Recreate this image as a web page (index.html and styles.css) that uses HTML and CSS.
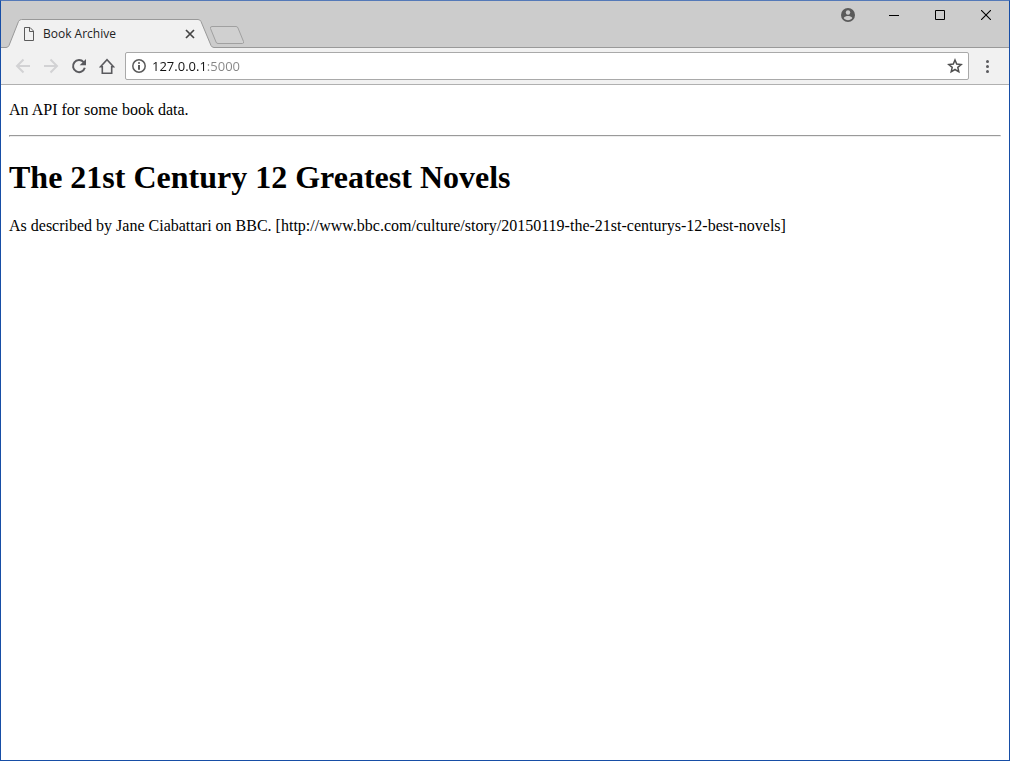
FILE: index.html
```html
<!DOCTYPE html>
<html lang="en">
<head>
<meta charset="utf-8">
<title>Book Archive</title>
<link rel="stylesheet" href="styles.css">
</head>
<body>
<div class="window">
  <header class="titlebar">
    <div class="tab">
      <svg class="tab-shape" width="208" height="29" viewBox="0 0 208 29" aria-hidden="true">
        <path d="M0 28.500Q2 28.500 3 26.500L12.500 2.500Q13.500 .5 15.500 .5H192Q194 .5 195 2.500L205 26.500Q206 28.500 208 28.500V29H0Z" fill="#f1f1f1"/>
        <path d="M0 28.500Q2 28.500 3 26.500L12.500 2.500Q13.500 .5 15.500 .5H192Q194 .5 195 2.500L205 26.500Q206 28.500 208 28.500" fill="none" stroke="#999"/>
      </svg>
      <svg class="page-icon" width="12" height="14" viewBox="0 0 12 14" fill="none" stroke="#5a5a5a" aria-hidden="true"><path d="M1.500 .5H7L10.500 4V13.500H1.500ZM6.500 .5V4.500H10.500"/></svg>
      <span class="tab-title">Book Archive</span>
      <button class="tab-close" aria-label="Close tab"><svg width="10" height="10" viewBox="0 0 10 10" stroke="#444" stroke-width="1.700"><path d="M1 1L9 9M9 1L1 9"/></svg></button>
    </div>
    <button class="new-tab" aria-label="New tab"><svg width="36" height="19" viewBox="0 0 36 19" fill="#d0d0d0" stroke="#a0a0a0"><path d="M3 .5H27Q28.500 .5 29 2L34.500 15.500Q35 17.500 33.500 17.500H9Q7.500 17.500 7 16L1.500 2.500Q1 .5 3 .5Z"/></svg></button>
    <div class="window-controls">
      <button aria-label="Profile"><svg width="14" height="14" viewBox="0 0 14 14"><circle cx="7" cy="7" r="7" fill="#5a5a5a"/><circle cx="7" cy="4.500" r="2.200" fill="#ccc"/><path d="M2.700 10C3.300 8.300 5.600 7.900 7 7.900S10.700 8.300 11.300 10C10.400 11.400 8.800 12.200 7 12.200S3.600 11.400 2.700 10Z" fill="#ccc"/></svg></button>
      <button aria-label="Minimize"><svg width="10" height="10" viewBox="0 0 10 10"><path d="M0 5H10V6H0Z"/></svg></button>
      <button aria-label="Maximize"><svg width="10" height="10" viewBox="0 0 10 10" fill="none" stroke="#000"><path d="M.5 .5H9.500V9.500H.5Z"/></svg></button>
      <button aria-label="Close"><svg width="10" height="10" viewBox="0 0 10 10" stroke="#000" stroke-width="1.100"><path d="M0 0L10 10M10 0L0 10"/></svg></button>
    </div>
  </header>
  <nav class="toolbar" aria-label="Browser">
    <button class="tool" aria-label="Back" disabled><svg width="16" height="16" viewBox="0 0 16 16" fill="none" stroke="#d2d2d4" stroke-width="2"><path d="M15 8H2.500M8.500 1.500L2 8L8.500 14.500"/></svg></button>
    <button class="tool" aria-label="Forward" disabled><svg width="16" height="16" viewBox="0 0 16 16" fill="none" stroke="#d2d2d4" stroke-width="2"><path d="M1 8H13.500M7.500 1.500L14 8L7.500 14.500"/></svg></button>
    <button class="tool" aria-label="Reload"><svg width="16" height="16" viewBox="0 0 16 16"><path d="M12.600 4.200A6 6 0 1 0 13.800 9.800" fill="none" stroke="#5a5a5e" stroke-width="2"/><path d="M15 1V7.300H8.700Z" fill="#5a5a5e"/></svg></button>
    <button class="tool" aria-label="Home"><svg width="16" height="16" viewBox="0 0 16 16" fill="none" stroke="#5a5a5e" stroke-width="1.600"><path d="M1.500 8.800H3.300V15.200H12.700V8.800H14.500L8 1.800Z"/></svg></button>
    <form class="omnibox">
      <button class="info" type="button" aria-label="View site information"><svg width="14" height="14" viewBox="0 0 14 14"><circle cx="7" cy="7" r="6.200" fill="none" stroke="#5a5a5a" stroke-width="1.500"/><path d="M6 3.200H8V4.800H6ZM6 6H8V10.800H6Z" fill="#5a5a5a"/></svg></button>
      <input class="address" type="text" aria-label="Address" value="127.0.0.1:5000">
      <button class="star" type="button" aria-label="Bookmark this page"><svg width="16" height="16" viewBox="0 0 16 16" fill="none" stroke="#505050" stroke-width="1.500"><path d="M8 2L9.700 6.100L14.200 6.500L10.800 9.400L11.800 13.800L8 11.500L4.200 13.800L5.200 9.400L1.800 6.500L6.300 6.100Z"/></svg></button>
    </form>
    <button class="tool" aria-label="Menu"><svg width="16" height="16" viewBox="0 0 16 16" fill="#5a5a5e"><circle cx="8.500" cy="3.500" r="1.500"/><circle cx="8.500" cy="8.500" r="1.500"/><circle cx="8.500" cy="13.500" r="1.500"/></svg></button>
  </nav>
  <main class="page">
    <p>An API for some book data.</p>
    <hr>
    <h1>The 21st Century 12 Greatest Novels</h1>
    <p>As described by Jane Ciabattari on BBC. [http://www.bbc.com/culture/story/20150119-the-21st-centurys-12-best-novels]</p>
  </main>
</div>
</body>
</html>
```
FILE: styles.css
```css
* { box-sizing: border-box; }
body { margin: 0; background: #fff; }
button { display: flex; align-items: center; justify-content: center; flex: none; margin: 0; padding: 0; border: 0; background: none; }
svg { display: block; flex: none; }

.window {
  display: flex;
  flex-direction: column;
  min-height: 100vh;
  border: 1px solid #174ea6;
  border-top-color: #5479b8;
  font-family: "Open Sans", "Noto Sans", sans-serif;
}

.titlebar {
  display: flex;
  align-items: flex-end;
  height: 47px;
  padding-left: 5px;
  background: #ccc;
  box-shadow: inset 0 -1px #999;
}
.tab {
  position: relative;
  display: flex;
  align-items: center;
  width: 208px;
  height: 29px;
  padding: 0 16px 0 17px;
}
.tab-shape { position: absolute; left: 0; top: 0; }
.page-icon, .tab-title, .tab-close { position: relative; }
.tab-title { flex: 1; margin-left: 8px; font-size: 12px; line-height: 16px; color: #222; }
.tab-close { width: 16px; height: 16px; }
.new-tab { align-self: flex-end; margin: 0 0 3px -5px; }
.window-controls { display: flex; align-self: flex-start; margin-left: auto; }
.window-controls button { width: 46px; height: 28px; }

.toolbar {
  display: flex;
  align-items: center;
  height: 37px;
  padding: 0 8px;
  background: #f1f1f1;
  border-bottom: 1px solid #b0b0b0;
}
.tool { width: 28px; height: 28px; }
.omnibox {
  display: flex;
  flex: 1;
  align-items: center;
  height: 28px;
  margin: 0 4px;
  padding: 0 5px 0 6px;
  border: 1px solid #a9a9a9;
  border-radius: 2px;
  background: #fff;
}
.address {
  flex: 1;
  min-width: 0;
  height: 20px;
  margin: 0 6px;
  padding: 0;
  border: 0;
  outline: 0;
  font: 13px/20px "Open Sans", "Noto Sans", sans-serif;
  color: transparent;
  caret-color: #000;
  background: linear-gradient(to right, #111 53px, #858585 53px);
  -webkit-background-clip: text;
  background-clip: text;
}

.page { flex: 1; padding: 0 8px; font: 16px/18px "Liberation Serif", serif; color: #000; }
.page p { margin: 16px 0; }
.page hr { margin: 16px 0; }
.page h1 { margin: 22px 0; font-size: 32px; line-height: 36px; }
```
